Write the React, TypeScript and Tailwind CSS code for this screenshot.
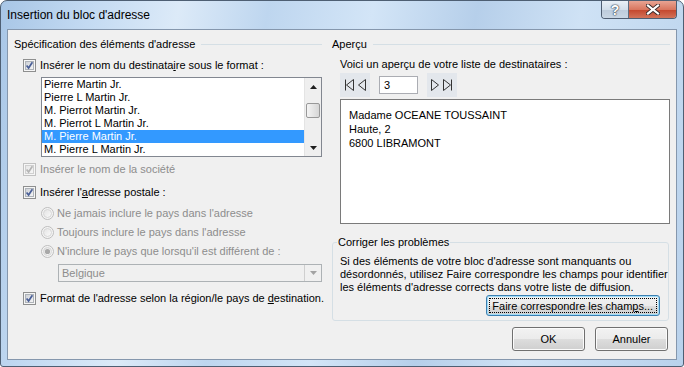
import { ReactNode } from "react";

function CheckBox({ disabled = false }: { disabled?: boolean }) {
  const edge = disabled ? "#c2c2c2" : "#8e8f8f";
  const inner = disabled ? "#d0d0d0" : "#aeb3b9";
  const mark = disabled ? "#b4b4b4" : "#4a5f97";
  return (
    <svg width="13" height="13" viewBox="0 0 13 13" className="shrink-0">
      <defs>
        <linearGradient id={disabled ? "cbd" : "cbe"} x1="0" y1="0" x2="1" y2="1">
          <stop offset="0" stopColor={disabled ? "#e6e6e6" : "#cbcfd5"} />
          <stop offset="1" stopColor="#f7f7f7" />
        </linearGradient>
      </defs>
      <rect x="0.5" y="0.5" width="12" height="12" fill="#f6f6f6" stroke={edge} />
      <rect x="2.5" y="2.5" width="8" height="8" fill={`url(#${disabled ? "cbd" : "cbe"})`} stroke={inner} />
      <path d="M3.6 6.4 L5.6 9 L9.4 3.2" fill="none" stroke={mark} strokeWidth="1.7" />
    </svg>
  );
}

function Radio({ checked = false }: { checked?: boolean }) {
  return (
    <svg width="13" height="13" viewBox="0 0 13 13" className="shrink-0">
      <defs>
        <linearGradient id="rg" x1="0" y1="0" x2="1" y2="1">
          <stop offset="0" stopColor="#e2e2e2" />
          <stop offset="1" stopColor="#fbfbfb" />
        </linearGradient>
      </defs>
      <circle cx="6.5" cy="6.5" r="6" fill="#f4f4f4" stroke="#bdbdbd" />
      <circle cx="6.5" cy="6.5" r="4" fill="url(#rg)" stroke="#d6d6d6" />
      {checked && <circle cx="6.5" cy="6.5" r="2.6" fill="#a8a8a8" />}
    </svg>
  );
}

function GroupHeader({ children }: { children: ReactNode }) {
  return (
    <div className="h-[14px] flex items-center">
      <span className="leading-[14px] whitespace-nowrap">{children}</span>
      <div className="flex-1 h-px bg-[#d5dfe5] ml-[6px]" />
    </div>
  );
}

function Row({ children, className }: { children: ReactNode; className: string }) {
  return <div className={`h-[14px] flex items-center whitespace-nowrap leading-[14px] ${className}`}>{children}</div>;
}

function WinButton({ children, focused = false, className = "" }: { children: ReactNode; focused?: boolean; className?: string }) {
  return (
    <div
      className={`rounded-[3px] border p-[2px] flex items-center justify-center bg-[linear-gradient(#f2f2f2_0%,#ebebeb_50%,#dddddd_51%,#cfcfcf_100%)] ${
        focused
          ? "border-[#3c7fb1] shadow-[inset_0_0_0_1px_#9fdcf8]"
          : "border-[#707070] shadow-[inset_0_0_0_1px_#fbfbfb]"
      } ${className}`}
    >
      <div
        className={`w-full h-full flex items-center justify-center leading-[14px] whitespace-nowrap ${
          focused ? "outline-1 outline-dotted outline-black -outline-offset-1" : ""
        }`}
      >
        {children}
      </div>
    </div>
  );
}

const items = [
  "Pierre Martin Jr.",
  "Pierre L Martin Jr.",
  "M. Pierrot Martin Jr.",
  "M. Pierrot L Martin Jr.",
  "M. Pierre Martin Jr.",
  "M. Pierre L Martin Jr.",
];

export default function App() {
  return (
    <div className="w-[684px] h-[367px] overflow-hidden rounded-t-[7px] rounded-b-[3px] border border-[#4e5f73] bg-[linear-gradient(100deg,#a8c6e6_0%,#c3daf2_12%,#dceaf8_24%,#bed6ef_36%,#d3e5f7_50%,#b6cfea_64%,#cfe2f5_78%,#b9d2ec_100%)] flex flex-col font-['Liberation_Sans',Arial,sans-serif] text-[11px] text-black">
      {/* Title bar */}
      <div className="h-[28px] flex items-start shrink-0">
        <div className="pl-[6px] pt-[7px] text-[12px] leading-[15px] text-black">Insertion du bloc d'adresse</div>
        <div className="ml-auto mr-[6px] flex h-[18px] rounded-b-[4px] border border-t-0 border-[#4f5e72] overflow-hidden">
          <div className="w-[27px] h-full flex items-center justify-center bg-[linear-gradient(#e9f0f7_0%,#d3dfeb_50%,#bccbdb_51%,#c9d6e4_100%)] border-r border-[#5d6d80]">
            <span className="text-white text-[14px] font-bold leading-none [text-shadow:0_0_1px_#3a4656,0_0_1px_#3a4656,0_0_2px_#3a4656]">?</span>
          </div>
          <div className="w-[47px] h-full flex items-center justify-center bg-[linear-gradient(#e8a493_0%,#d9765f_50%,#c4452c_51%,#d2735a_100%)]">
            <svg width="14" height="11" viewBox="0 0 14 11">
              <path d="M2 1.5 L12 9.5 M12 1.5 L2 9.5" stroke="#3a2a2a" strokeWidth="4" strokeLinecap="square" />
              <path d="M2 1.5 L12 9.5 M12 1.5 L2 9.5" stroke="#ffffff" strokeWidth="2.2" strokeLinecap="square" />
            </svg>
          </div>
        </div>
      </div>

      {/* Client area */}
      <div className="mx-[6px] h-[331px] border border-[#8597ad] bg-[#f0f0f0] flex pl-[6px] pt-[7px]">
        {/* Left column */}
        <div className="w-[308px] flex flex-col">
          <GroupHeader>Spécification des éléments d'adresse</GroupHeader>
          <Row className="mt-[7px] pl-[9px] gap-[4px]">
            <CheckBox />
            <span>
              Insérer le nom du destinata<u>i</u>re sous le format :
            </span>
          </Row>

          <div className="mt-[5px] ml-[27px] w-[281px] h-[80px] border border-[#828790] bg-white flex">
            <div className="flex-1 flex flex-col">
              {items.map((t, i) => (
                <div
                  key={t}
                  className={`h-[13px] leading-[13px] pl-[2px] whitespace-nowrap ${
                    i === 4 ? "bg-[#3399ff] text-white" : ""
                  }`}
                >
                  {t}
                </div>
              ))}
            </div>
            <div className="w-[17px] bg-[#efefef] border-l border-[#e4e4e4] flex flex-col items-center">
              <div className="h-[17px] flex items-center justify-center">
                <svg width="7" height="4" viewBox="0 0 7 4">
                  <path d="M0 4 L3.5 0 L7 4 Z" fill="#1e1e1e" />
                </svg>
              </div>
              <div className="mt-[8px] w-[14px] h-[15px] rounded-[2px] border border-[#989898] bg-[linear-gradient(90deg,#f4f4f4,#e2e2e2_60%,#d6d6d6)]" />
              <div className="mt-auto h-[17px] flex items-center justify-center">
                <svg width="7" height="4" viewBox="0 0 7 4">
                  <path d="M0 0 L7 0 L3.5 4 Z" fill="#1e1e1e" />
                </svg>
              </div>
            </div>
          </div>

          <Row className="mt-[5px] pl-[9px] gap-[4px] text-[#8d8d8d]">
            <CheckBox disabled />
            <span>Insérer le nom de la société</span>
          </Row>
          <Row className="mt-[9px] pl-[9px] gap-[4px]">
            <CheckBox />
            <span>
              Insérer l'<u>a</u>dresse postale :
            </span>
          </Row>
          <Row className="mt-[7px] pl-[27px] gap-[3px] text-[#8d8d8d]">
            <Radio />
            <span>Ne jamais inclure le pays dans l'adresse</span>
          </Row>
          <Row className="mt-[5px] pl-[27px] gap-[3px] text-[#8d8d8d]">
            <Radio />
            <span>Toujours inclure le pays dans l'adresse</span>
          </Row>
          <Row className="mt-[5px] pl-[27px] gap-[3px] text-[#8d8d8d]">
            <Radio checked />
            <span>N'inclure le pays que lorsqu'il est différent de :</span>
          </Row>

          <div className="mt-[6px] ml-[44px] w-[264px] h-[18px] border border-[#adb2b5] bg-[#f0f0f0] flex">
            <div className="flex-1 pl-[3px] leading-[16px] text-[#8d8d8d]">Belgique</div>
            <div className="w-[17px] border-l border-[#cfcfcf] flex items-center justify-center">
              <svg width="7" height="4" viewBox="0 0 7 4">
                <path d="M0 0 L7 0 L3.5 4 Z" fill="#a3a3a3" />
              </svg>
            </div>
          </div>

          <Row className="mt-[9px] pl-[9px] gap-[4px]">
            <CheckBox />
            <span>
              Format de l'adresse selon la région/le pays de <u>d</u>estination.
            </span>
          </Row>
        </div>

        {/* Right column */}
        <div className="ml-[10px] flex-1 flex flex-col">
          <div className="mr-[6px]">
            <GroupHeader>Aperçu</GroupHeader>
          </div>
          <Row className="mt-[6px] pl-[8px]">
            <span>Voici un aperçu de votre liste de destinataires :</span>
          </Row>
          <div className="mt-[2px] h-[24px] flex items-center pl-[8px]">
            <div className="w-[30px] h-[24px] bg-[#e3e7ec] flex items-center justify-center">
              <svg width="26" height="14" viewBox="0 0 26 14">
                <path d="M3.5 1.5 V12.5" stroke="#333" strokeWidth="1" />
                <path d="M11.5 1.5 L4.5 7 L11.5 12.5 Z" fill="none" stroke="#333" strokeWidth="1" strokeLinejoin="round" />
                <path d="M23.5 1.5 L16.5 7 L23.5 12.5 Z" fill="none" stroke="#333" strokeWidth="1" strokeLinejoin="round" />
              </svg>
            </div>
            <div className="ml-[9px] w-[39px] h-[18px] border border-[#abadb3] bg-white pl-[4px] leading-[16px]">3</div>
            <div className="ml-[9px] w-[30px] h-[24px] bg-[#e3e7ec] flex items-center justify-center">
              <svg width="26" height="14" viewBox="0 0 26 14">
                <path d="M2.5 1.5 L9.5 7 L2.5 12.5 Z" fill="none" stroke="#333" strokeWidth="1" strokeLinejoin="round" />
                <path d="M14.5 1.5 L21.5 7 L14.5 12.5 Z" fill="none" stroke="#333" strokeWidth="1" strokeLinejoin="round" />
                <path d="M22.5 1.5 V12.5" stroke="#333" strokeWidth="1" />
              </svg>
            </div>
          </div>

          <div className="mt-[2px] ml-[8px] w-[330px] h-[125px] border border-[#7a7a7a] bg-white pl-[8px] pt-[8px] leading-[14px]">
            <div>Madame OCEANE TOUSSAINT</div>
            <div>Haute, 2</div>
            <div>6800 LIBRAMONT</div>
          </div>

          <fieldset className="mt-[11px] w-[336px] border border-[#d5dfe5] rounded-[3px]">
            <legend className="ml-[4px] px-[1px] leading-[14px]">Corriger les problèmes</legend>
            <div className="pl-[7px] pt-[6px] leading-[13px] whitespace-nowrap">
              Si des éléments de votre bloc d'adresse sont manquants ou
              <br />
              désordonnés, utilisez Faire correspondre les champs pour identifier
              <br />
              les éléments d'adresse corrects dans votre liste de diffusion.
            </div>
            <div className="mt-[1px] pr-[8px] pb-[4px] flex justify-end">
              <WinButton focused className="w-[174px] h-[21px]">
                <span>
                  Faire correspondre les cham<u>p</u>s...
                </span>
              </WinButton>
            </div>
          </fieldset>

          <div className="mt-[6px] mr-[8px] flex justify-end gap-[10px]">
            <WinButton className="w-[73px] h-[24px]">OK</WinButton>
            <WinButton className="w-[73px] h-[24px]">Annuler</WinButton>
          </div>
        </div>
      </div>
    </div>
  );
}
